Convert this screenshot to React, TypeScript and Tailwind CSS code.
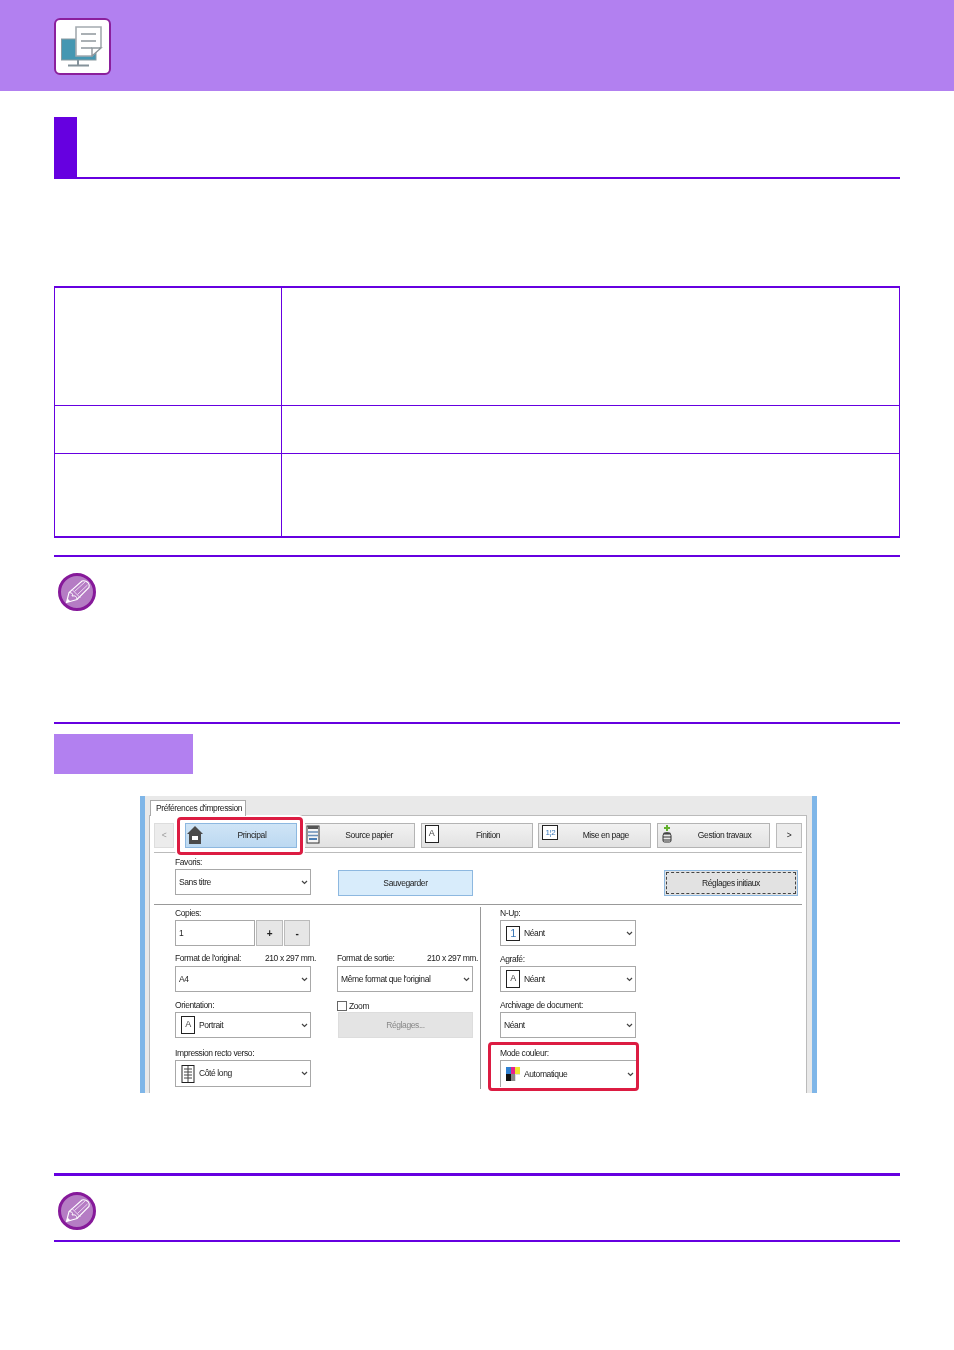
import { ReactNode } from 'react'

function NoteIcon() {
  return (
    <svg width="40" height="40" viewBox="0 0 40 40" className="shrink-0 blur-[0.3px]">
      <circle cx="20" cy="20" r="17.5" fill="#b57cc4" stroke="#86199a" strokeWidth="3" />
      <path d="M9.5 30.5 L12 20.5 L25 9 Q28 8 31 10.5 Q33 13 32 15.5 L20 27.5 Z" fill="none" stroke="#fff" strokeWidth="1.1" />
      <path d="M15 17.5 L23.5 26 M17.5 19.5 L28 10 M20.5 22.5 L30.5 13" fill="none" stroke="#f3e3f6" strokeWidth="0.9" />
      <path d="M12 20.5 Q17 21 15 24 Q20 23 20 27.5" fill="none" stroke="#fff" strokeWidth="1" />
      <path d="M9.5 30.5 L10.5 26.5 L13.5 29.5 Z" fill="#fff" />
    </svg>
  )
}

function HeaderIcon() {
  return (
    <div className="w-[57px] h-[57px] rounded-[6px] bg-white border-2 border-[#8b1f9c] flex items-center justify-center">
      <svg width="47" height="47" viewBox="0 0 47 47" className="blur-[0.4px]">
        <rect x="2.5" y="16" width="34.5" height="21" fill="#4597b2" stroke="#8a9aa0" />
        <path d="M19 37 V42 M9 42.5 H30" stroke="#84929a" strokeWidth="2" fill="none" />
        <path d="M17 4 H42 V24 L33 33 H17 Z" fill="#fff" stroke="#a4abb0" strokeWidth="1.6" />
        <path d="M22 11 H37 M22 18 H37 M22 25 H33" stroke="#8f979c" strokeWidth="1.3" fill="none" />
        <path d="M33 33 V25 H42 Z" fill="#fff" stroke="#8f979c" strokeWidth="1.4" />
      </svg>
    </div>
  )
}

function Chevron() {
  return (
    <svg width="7" height="5" viewBox="0 0 7 5" className="shrink-0">
      <path d="M1 1 L3.5 3.5 L6 1" fill="none" stroke="#444" strokeWidth="1.2" />
    </svg>
  )
}

function PageIcon({ label = 'A' }: { label?: string }) {
  return (
    <span className="w-[14px] h-[18px] border border-[#222] bg-white flex items-center justify-center text-[9px] text-[#444] shrink-0">
      {label}
    </span>
  )
}

function Select({ children, icon, className = '' }: { children: ReactNode; icon?: ReactNode; className?: string }) {
  return (
    <div className={`h-[26px] w-[136px] border border-[#a8a8a8] bg-white flex items-center pl-[3px] pr-[2px] gap-[4px] ${className}`}>
      {icon}
      <span className="flex-1 truncate">{children}</span>
      <Chevron />
    </div>
  )
}

function ToolButton({ label, icon, className = '' }: { label: string; icon: ReactNode; className?: string }) {
  return (
    <div className={`relative h-[25px] w-[113px] border border-[#b4b4b4] bg-gradient-to-b from-[#f2f2f2] to-[#e2e2e2] flex items-center justify-center ${className}`}>
      <span className="absolute left-[3px] top-[1px]">{icon}</span>
      <span className="pl-[22px]">{label}</span>
    </div>
  )
}

function Label({ children, right }: { children: ReactNode; right?: string }) {
  return (
    <div className="h-[14px] flex justify-between items-center w-[141px] -mr-[5px] whitespace-nowrap">
      <span>{children}</span>
      {right && <span>{right}</span>}
    </div>
  )
}

function PrintDialog() {
  return (
    <div className="relative w-[677px] h-[297px] ml-[140px] mt-[22px] bg-[#e9e9e9] border-x-[5px] border-[#7fb6e8] pl-[4px] pr-[5px] pt-[4px] overflow-hidden text-[8.5px] tracking-[-0.4px] text-[#222] blur-[0.25px]">
      <div className="w-[96px] h-[16px] ml-[1px] bg-white border border-b-0 border-[#aaa] flex items-center pl-[5px] relative z-10 -mb-[1px] whitespace-nowrap">
        Préférences d'impression
      </div>
      <div className="bg-white border-t border-l border-r border-[#bbb] h-[280px] pt-[7px] px-[4px]">
        {/* barre d'onglets */}
        <div className="flex items-center h-[25px]">
          <div className="w-[20px] h-[25px] bg-[#ececec] border border-[#ddd] flex items-center justify-center text-[#999] mr-[11px]">&lt;</div>
          <div className="relative h-[25px] w-[112px] bg-gradient-to-b from-[#cfe4f6] to-[#bcd9f1] border border-[#8db8e0] flex items-center justify-center mr-[5px]">
            <svg width="16" height="18" viewBox="0 0 16 18" className="absolute left-[1px] top-[2px]">
              <path d="M8 0 L16 8 H14 V18 H2 V8 H0 Z" fill="#4a4a4a" />
              <rect x="5" y="10" width="6" height="4" fill="#fff" />
            </svg>
            <span className="pl-[22px]">Principal</span>
          </div>
          <ToolButton
            className="mr-[6px]"
            label="Source papier"
            icon={
              <svg width="14" height="19" viewBox="0 0 14 19">
                <rect x="1" y="1" width="12" height="17" fill="#f5f5f5" stroke="#333" />
                <rect x="2" y="1" width="10" height="3" fill="#555" />
                <path d="M2 7 H12 M2 10.5 H12" stroke="#6a8fb8" strokeWidth="1.4" />
                <rect x="3" y="13" width="8" height="2" fill="#4d7fb5" />
              </svg>
            }
          />
          <ToolButton className="mr-[5px]" label="Finition" icon={<PageIcon />} />
          <ToolButton
            className="mr-[6px]"
            label="Mise en page"
            icon={
              <span className="w-[16px] h-[15px] border border-[#222] bg-white flex items-center justify-center text-[8px] text-[#3b78b8]">1¦2</span>
            }
          />
          <ToolButton
            className="mr-[6px]"
            label="Gestion travaux"
            icon={
              <svg width="14" height="19" viewBox="0 0 14 19">
                <path d="M5 0 H7 V2 H9 V4 H7 V6 H5 V4 H3 V2 H5 Z" fill="#62b02e" />
                <ellipse cx="6" cy="9" rx="4" ry="2" fill="#555" />
                <rect x="2" y="9" width="8" height="8" rx="1.5" fill="#e8e8e8" stroke="#333" />
                <path d="M2 12 H10 M2 15 H10" stroke="#333" />
              </svg>
            }
          />
          <div className="w-[26px] h-[25px] bg-[#ececec] border border-[#bbb] flex items-center justify-center">&gt;</div>
        </div>
        <div className="h-px bg-[#bbb] mt-[4px]" />

        {/* favoris */}
        <div className="flex pl-[21px] mt-[3px] h-[43px]">
          <div className="w-[136px]">
            <div className="h-[13px] flex items-center">Favoris:</div>
            <Select>Sans titre</Select>
          </div>
          <div className="w-[135px] h-[26px] ml-[27px] mt-[14px] bg-[#d8ecfb] border border-[#8db8e0] flex items-center justify-center">Sauvegarder</div>
          <div className="w-[134px] h-[26px] ml-[191px] mt-[14px] p-[1px] bg-[#e2e2e2] border border-[#8db8e0] flex">
            <div className="flex-1 border border-dashed border-[#444] flex items-center justify-center">Réglages initiaux</div>
          </div>
        </div>
        <div className="h-px bg-[#999] mt-[5px]" />

        {/* réglages */}
        <div className="flex pl-[21px] mt-[2px]">
          <div className="w-[136px]">
            <div className="h-[13px] flex items-center">Copies:</div>
            <div className="flex h-[26px]">
              <div className="w-[80px] border border-[#a8a8a8] flex items-center pl-[3px]">1</div>
              <div className="w-[27px] ml-[1px] bg-[#e6e6e6] border border-[#bbb] flex items-center justify-center font-bold text-[10px]">+</div>
              <div className="w-[26px] ml-[1px] bg-[#e6e6e6] border border-[#bbb] flex items-center justify-center font-bold text-[10px]">-</div>
            </div>
            <div className="mt-[5px]">
              <Label right="210 x 297 mm.">Format de l'original:</Label>
            </div>
            <Select className="mt-[1px]">A4</Select>
            <div className="mt-[6px]"><Label>Orientation:</Label></div>
            <Select icon={<PageIcon />} className="pl-[5px]">Portrait</Select>
            <div className="mt-[8px]"><Label>Impression recto verso:</Label></div>
            <Select
              className="h-[27px] pl-[4px]"
              icon={
                <svg width="14" height="18" viewBox="0 0 14 18" className="ml-[1px]">
                  <rect x="1" y="0.5" width="12" height="17" fill="#fff" stroke="#222" />
                  <path d="M7 1 V17 M3 4 H11 M3 7 H11 M3 10 H11 M3 13 H11" stroke="#444" />
                </svg>
              }
            >
              Côté long
            </Select>
          </div>

          <div className="w-[136px] ml-[26px] pt-[44px]">
            <Label right="210 x 297 mm.">Format de sortie:</Label>
            <Select className="mt-[1px]">Même format que l'original</Select>
            <div className="flex items-center gap-[2px] mt-[7px] h-[14px]">
              <span className="w-[10px] h-[10px] border border-[#666] bg-white" />
              Zoom
            </div>
            <div className="h-[26px] w-[135px] bg-[#e4e4e4] border border-[#ddd] flex items-center justify-center text-[#888] mt-[-1px] ml-[1px]">Réglages...</div>
          </div>

          <div className="w-px h-[182px] bg-[#999] ml-[7px] mr-[19px]" />

          <div className="w-[136px]">
            <div className="h-[13px] flex items-center">N-Up:</div>
            <Select
              className="pl-[5px]"
              icon={<span className="w-[14px] h-[15px] border border-[#222] flex items-center justify-center text-[11px] text-[#3b78b8]">1</span>}
            >
              Néant
            </Select>
            <div className="mt-[6px] h-[14px] flex items-center">Agrafé:</div>
            <Select className="pl-[5px]" icon={<PageIcon />}>Néant</Select>
            <div className="mt-[6px] h-[14px] flex items-center">Archivage de document:</div>
            <Select>Néant</Select>
            <div className="mt-[8px] h-[14px] flex items-center">Mode couleur:</div>
            <Select
              className="pl-[5px] !border-r-0 !border-b-0 h-[27px]"
              icon={
                <svg width="14" height="14" viewBox="0 0 3 3" className="shrink-0" shapeRendering="crispEdges">
                  <rect x="0" y="0" width="1" height="2" fill="#2f80d0" />
                  <rect x="1" y="0" width="1" height="2" fill="#e6228c" />
                  <rect x="2" y="0" width="1" height="2" fill="#efe52d" />
                  <rect x="0" y="1.6" width="1" height="1.4" fill="#111" />
                  <rect x="1" y="1.6" width="1" height="1.4" fill="#888" />
                  <rect x="2" y="1.6" width="1" height="1.4" fill="#fff" stroke="#bbb" strokeWidth="0.1" />
                </svg>
              }
            >
              Automatique
            </Select>
          </div>
        </div>
      </div>

      {/* encadrés rouges */}
      <div className="absolute left-[32px] top-[21px] w-[126px] h-[38px] rounded-[4px] border-[3px] border-[#dc1c42] ring-2 ring-white" />
      <div className="absolute left-[343px] top-[246px] w-[151px] h-[49px] rounded-[4px] border-[3px] border-[#dc1c42]" />
    </div>
  )
}

export default function App() {
  return (
    <div className="w-[954px] h-[1350px] bg-white font-['Liberation_Sans',Arial,sans-serif]">
      <header className="h-[91px] bg-[#b280f0] pl-[54px] pt-[18px]">
        <HeaderIcon />
      </header>

      <div className="px-[54px]">
        <div className="mt-[26px] h-[62px] border-b-2 border-[#6600e0]">
          <div className="w-[23px] h-[60px] bg-[#6600e0]" />
        </div>

        <div className="mt-[107px] border-y-2 border-x border-[#6600e0] h-[252px] grid grid-cols-[227px_1fr] grid-rows-[118px_48px_1fr]">
          <div className="border-r border-b border-[#6600e0]" />
          <div className="border-b border-[#6600e0]" />
          <div className="border-r border-b border-[#6600e0]" />
          <div className="border-b border-[#6600e0]" />
          <div className="border-r border-[#6600e0]" />
          <div />
        </div>

        <div className="mt-[17px] h-[169px] border-y-2 border-[#6600e0] pl-[3px] pt-[15px]">
          <NoteIcon />
        </div>

        <div className="mt-[10px] w-[139px] h-[40px] bg-[#b280f0]" />
      </div>

      <PrintDialog />

      <div className="mx-[54px] mt-[80px] h-[69px] border-t-[3px] border-b-2 border-[#6600e0] pl-[3px] pt-[15px]">
        <NoteIcon />
      </div>
    </div>
  )
}
